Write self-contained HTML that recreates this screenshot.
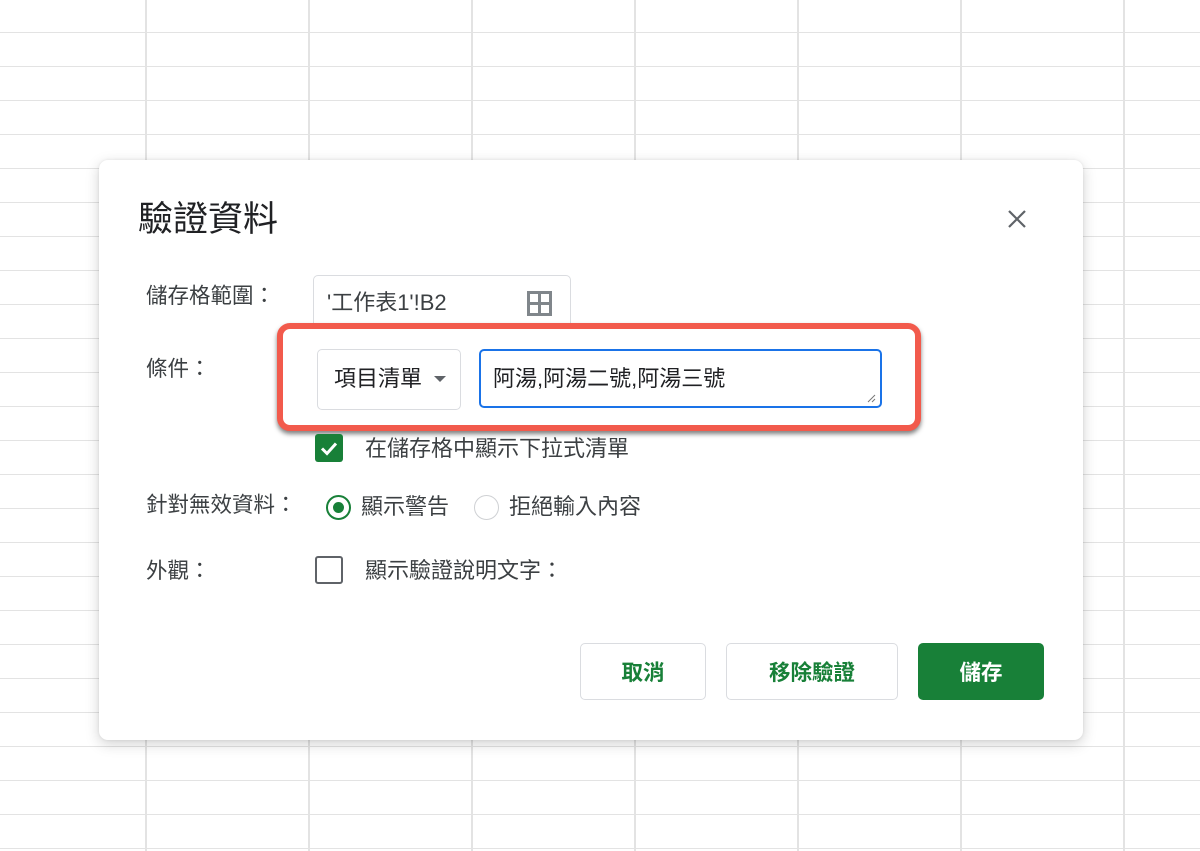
<!DOCTYPE html>
<html><head><meta charset="utf-8"><style>
*{margin:0;padding:0;box-sizing:border-box}
body{width:1200px;height:851px;overflow:hidden;position:relative;background:#fff;font-family:"Liberation Sans","Noto Sans CJK TC",sans-serif;color:#3c4043}
.grid{position:absolute;inset:0;background:
repeating-linear-gradient(to right,transparent 0,transparent 145px,#e3e3e3 145px,#e3e3e3 147px,transparent 147px,transparent 163px),
repeating-linear-gradient(to bottom,transparent 0,transparent 33px,#e3e3e3 33px,#e3e3e3 35px,transparent 35px,transparent 34px);background-size:163px 100%,100% 34px;background-position:0 0,0 -1px}
.dlg{position:absolute;left:99px;top:160px;width:984px;height:580px;background:#fff;border-radius:9px;box-shadow:0 4px 14px rgba(0,0,0,.18),0 0 3px rgba(0,0,0,.08)}
.a{position:absolute;white-space:nowrap}
.t{font-size:21.5px;line-height:26px}
.o{font-size:22px;line-height:26px}
.btn{position:absolute;top:643px;height:57px;border:1px solid #dadce0;border-radius:5px;font-size:21.5px;font-weight:bold;color:#188038;display:flex;align-items:center;justify-content:center;background:#fff}
</style></head><body>
<div class="grid"></div>
<div class="dlg"></div>
<div class="a" style="left:138px;top:199px;font-size:35px;line-height:42px;color:#202124">驗證資料</div>
<svg class="a" style="left:1007px;top:209px" width="20" height="20" viewBox="0 0 20 20"><path d="M2 2L18 18M18 2L2 18" stroke="#5f6368" stroke-width="2.2"/></svg>
<div class="a t" style="left:146px;top:283px">儲存格範圍：</div>
<div class="a" style="left:313px;top:275px;width:258px;height:60px;border:1px solid #dadce0;border-radius:5px"></div>
<div class="a o" style="left:327px;top:290px;color:#3c4043">'工作表1'!B2</div>
<svg class="a" style="left:527px;top:291px" width="25" height="25" viewBox="0 0 25 25"><rect x="1.5" y="1.5" width="22" height="22" fill="none" stroke="#80868b" stroke-width="3"/><path d="M12.5 1v23M1 12.5h23" stroke="#80868b" stroke-width="3"/></svg>
<div class="a t" style="left:146px;top:356px">條件：</div>
<div class="a" style="left:277px;top:323px;width:644px;height:108px;border:6px solid #f25a4c;border-radius:13px;background:#fff;box-shadow:0 3px 5px rgba(0,0,0,.5)"></div>
<div class="a" style="left:317px;top:349px;width:144px;height:61px;border:1px solid #dadce0;border-radius:5px"></div>
<div class="a o" style="left:334px;top:366px;color:#202124">項目清單</div>
<svg class="a" style="left:433px;top:375px" width="14" height="8" viewBox="0 0 14 8"><path d="M1 1h12L7 7z" fill="#5f6368"/></svg>
<div class="a" style="left:479px;top:349px;width:403px;height:59px;border:2px solid #1a73e8;border-radius:5px"></div>
<div class="a o" style="left:493px;top:366px;color:#202124">阿湯,阿湯二號,阿湯三號</div>
<svg class="a" style="left:866px;top:393px" width="10" height="10" viewBox="0 0 10 10"><path d="M9 2L2 9M9 6L6 9" stroke="#777" stroke-width="1"/></svg>
<div class="a" style="left:315px;top:434px;width:28px;height:28px;background:#188038;border-radius:3px"></div>
<svg class="a" style="left:315px;top:434px" width="28" height="28" viewBox="0 0 28 28"><path d="M7 14.5l5 5 9-10" stroke="#fff" stroke-width="3" fill="none"/></svg>
<div class="a o" style="left:365px;top:436px">在儲存格中顯示下拉式清單</div>
<div class="a t" style="left:146px;top:492px">針對無效資料：</div>
<div class="a" style="left:326px;top:495px;width:25px;height:25px;border:2.5px solid #188038;border-radius:50%"></div>
<div class="a" style="left:333px;top:502px;width:11px;height:11px;background:#188038;border-radius:50%"></div>
<div class="a o" style="left:361px;top:494px">顯示警告</div>
<div class="a" style="left:474px;top:495px;width:25px;height:25px;border:1.5px solid #cfd1d4;border-radius:50%"></div>
<div class="a o" style="left:509px;top:494px">拒絕輸入內容</div>
<div class="a t" style="left:146px;top:558px">外觀：</div>
<div class="a" style="left:315px;top:556px;width:28px;height:28px;border:2.5px solid #5f6368;border-radius:3px"></div>
<div class="a o" style="left:365px;top:558px">顯示驗證說明文字：</div>
<div class="btn" style="left:580px;width:126px">取消</div>
<div class="btn" style="left:726px;width:172px">移除驗證</div>
<div class="btn" style="left:918px;width:126px;background:#188038;border-color:#188038;color:#fff">儲存</div>
</body></html>
